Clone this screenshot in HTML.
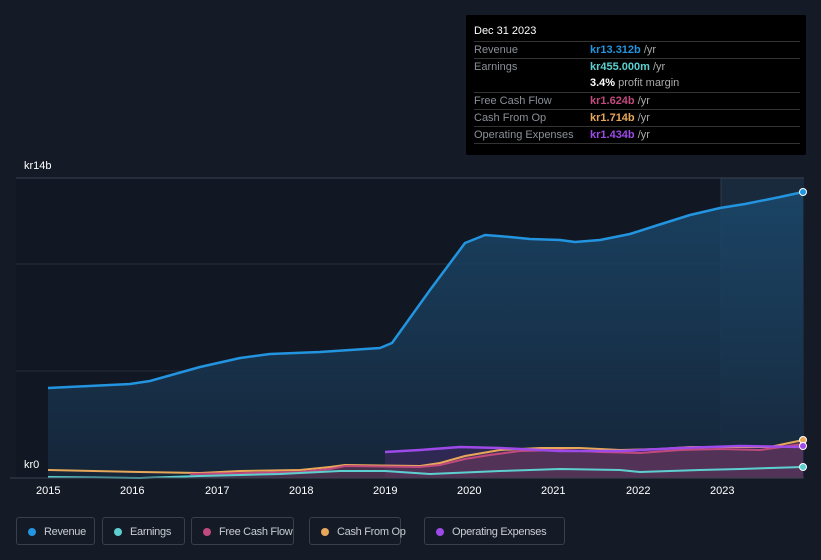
<!DOCTYPE html>
<html><head><meta charset="utf-8"><style>
html,body{margin:0;width:821px;height:560px;overflow:hidden}
body{background:#151b26;font-family:"Liberation Sans",sans-serif;position:relative}
.tt{position:absolute;left:466px;top:15px;width:340px;height:140px;background:#000;border-radius:2px;font-size:11px;color:#8a8f98}
.tt .h{position:absolute;left:8px;top:10px;color:#fff;font-size:11px}
.row{position:absolute;left:8px;width:326px;height:17px;border-top:1px solid #333;line-height:17px}
.row span.v{position:absolute;left:116px;font-weight:bold}
.row span.u{color:#aaa;font-weight:normal}
.leg{position:absolute;top:517px;height:28px;border:1px solid #3a3f4a;border-radius:3px;color:#c9ccd2;font-size:11px;line-height:28px;box-sizing:border-box;padding-left:27px;white-space:nowrap;letter-spacing:-0.3px}
.leg i{position:absolute;left:11px;top:10px;width:8px;height:8px;border-radius:50%}
.ax{position:absolute;top:485px;color:#fff;font-size:11px}
</style></head><body>
<svg width="821" height="560" style="position:absolute;left:0;top:0">
<defs><linearGradient id="g" x1="0" y1="0" x2="0" y2="1"><stop offset="0" stop-color="#1b4a6e" stop-opacity=".8"/><stop offset="1" stop-color="#16263a" stop-opacity=".9"/></linearGradient></defs>
<rect x="16" y="178" width="788" height="300" fill="#111723"/>
<rect x="721" y="178" width="83" height="300" fill="#1a2a3d"/>
<line x1="16" y1="178" x2="804" y2="178" stroke="#3a4150"/>
<line x1="16" y1="264" x2="804" y2="264" stroke="#262d3a"/>
<line x1="16" y1="371" x2="804" y2="371" stroke="#262d3a"/>
<line x1="721" y1="178" x2="721" y2="478" stroke="#2e3a4a"/>
<path d="M48,388 L130,384 150,381 200,367 240,358 270,354 320,352 380,348 392,343 430,290 465,243 485,235 510,237 530,239 560,240 575,242 600,240 630,234 655,226 690,215 720,208 745,204 780,197 803,192 L803,478 48,478Z" fill="url(#g)"/>
<path d="M48,388 L130,384 150,381 200,367 240,358 270,354 320,352 380,348 392,343 430,290 465,243 485,235 510,237 530,239 560,240 575,242 600,240 630,234 655,226 690,215 720,208 745,204 780,197 803,192" fill="none" stroke="#2394df" stroke-width="2.5" stroke-linejoin="round"/>
<path d="M385,452 L420,450 460,447 500,448 560,451 620,451 680,448 740,446 803,447 L803,478 385,478Z" fill="#3b2a5e" opacity=".7"/>
<path d="M190,475 L300,472 340,466 420,467 440,464 465,457 490,453 520,449 560,448 600,451 640,452 680,449 720,448 760,449 803,441 L803,478 190,478Z" fill="#6a3a5a" opacity=".6"/>
<path d="M48,470 L140,472 200,473 240,471 300,470 330,467 345,465 420,466 440,463 465,456 500,450 540,448 580,448 620,450 660,449 690,447 740,447 770,447 803,440" fill="none" stroke="#e8a85a" stroke-width="2"/>
<path d="M190,474 L300,472 330,469 345,466 420,467 440,465 465,459 490,455 520,451 560,450 600,452 640,453 680,450 720,449 760,450 803,444" fill="none" stroke="#c04a7e" stroke-width="2"/>
<path d="M385,452 L420,450 460,447 500,448 560,451 620,451 680,448 740,446 803,447" fill="none" stroke="#9d4ae8" stroke-width="2.5"/>
<path d="M48,477 L140,478 200,476 280,474 340,471 385,471 430,474 500,471 560,469 620,470 640,472 700,470 740,469 803,467" fill="none" stroke="#5ecfd0" stroke-width="2"/>
<circle cx="803" cy="192" r="3.5" fill="#2394df" stroke="#fff"/>
<circle cx="803" cy="440" r="3.5" fill="#e8a85a" stroke="#fff"/>
<circle cx="803" cy="446" r="3.5" fill="#9d4ae8" stroke="#fff"/>
<circle cx="803" cy="467" r="3.5" fill="#5ecfd0" stroke="#fff"/>
<line x1="10" y1="478" x2="804" y2="478" stroke="#3a4150"/>
</svg>
<div style="position:absolute;left:24px;top:160px;color:#fff;font-size:11px">kr14b</div>
<div style="position:absolute;left:24px;top:459px;color:#fff;font-size:11px">kr0</div>
<div class="ax" style="left:36px">2015</div><div class="ax" style="left:120px">2016</div><div class="ax" style="left:205px">2017</div><div class="ax" style="left:289px">2018</div><div class="ax" style="left:373px">2019</div><div class="ax" style="left:457px">2020</div><div class="ax" style="left:541px">2021</div><div class="ax" style="left:626px">2022</div><div class="ax" style="left:710px">2023</div>
<div class="tt">
<div class="h">Dec 31 2023</div>
<div class="row" style="top:26px">Revenue<span class="v" style="color:#2394df">kr13.312b <span class="u">/yr</span></span></div>
<div class="row" style="top:43px">Earnings<span class="v" style="color:#5ecfd0">kr455.000m <span class="u">/yr</span></span></div>
<div class="row" style="top:60px;border-top:none"><span class="v" style="color:#fff">3.4% <span class="u">profit margin</span></span></div>
<div class="row" style="top:77px">Free Cash Flow<span class="v" style="color:#c04a7e">kr1.624b <span class="u">/yr</span></span></div>
<div class="row" style="top:94px">Cash From Op<span class="v" style="color:#e8a85a">kr1.714b <span class="u">/yr</span></span></div>
<div class="row" style="top:111px">Operating Expenses<span class="v" style="color:#9d4ae8">kr1.434b <span class="u">/yr</span></span></div>
<div class="row" style="top:128px;height:0"></div>
</div>
<div class="leg" style="left:16px;width:79px"><i style="background:#2394df"></i>Revenue</div>
<div class="leg" style="left:102px;width:83px"><i style="background:#5ecfd0"></i>Earnings</div>
<div class="leg" style="left:191px;width:103px"><i style="background:#c04a7e"></i>Free Cash Flow</div>
<div class="leg" style="left:309px;width:92px"><i style="background:#e8a85a"></i>Cash From Op</div>
<div class="leg" style="left:424px;width:141px"><i style="background:#9d4ae8"></i>Operating Expenses</div>
</body></html>
